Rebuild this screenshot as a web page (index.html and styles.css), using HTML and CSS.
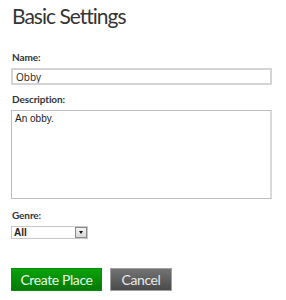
FILE: index.html
```html
<!DOCTYPE html>
<html lang="en">
<head>
    <meta charset="utf-8" />
    <title>Basic Settings</title>
    <link rel="stylesheet" href="styles.css">
</head>
<body>
    <div class="settings">
        <h1>Basic Settings</h1>

        <div class="field">
            <label for="name">Name:</label>
            <input id="name" class="text-input" type="text" value="Obby" />
        </div>

        <div class="field">
            <label for="description">Description:</label>
            <textarea id="description" class="text-area">An obby.</textarea>
        </div>

        <div class="field">
            <label for="genre">Genre:</label>
            <div class="select">
                <span class="select-value">All</span>
                <span class="select-arrow"></span>
            </div>
        </div>

        <div class="actions">
            <button class="btn btn-create">Create Place</button>
            <button class="btn btn-cancel">Cancel</button>
        </div>
    </div>
</body>
</html>
```

FILE: styles.css
```css
* {
    margin: 0;
    padding: 0;
    box-sizing: border-box;
}

body {
    font-family: Lato, "Open Sans", sans-serif;
    background: #fff;
    color: #333;
    width: 286px;
    height: 300px;
    overflow: hidden;
}

.settings {
    padding: 2px 14px 0 11px;
}

h1 {
    font-size: 21px;
    font-weight: 400;
    letter-spacing: -1px;
    line-height: 28px;
    color: #343434;
    margin-bottom: 21px;
    padding-left: 1px;
}

.field {
    display: flex;
    flex-direction: column;
}

.field label {
    font-size: 10px;
    font-weight: 700;
    letter-spacing: -0.1px;
    color: #333;
    line-height: 13px;
    margin-bottom: 4px;
    padding-left: 1px;
}

.text-input {
    width: 261px;
    height: 17px;
    border: 2px solid #d4d4d4;
    font-family: "Open Sans", sans-serif;
    font-size: 10px;
    color: #222;
    padding: 0 3px;
    margin-bottom: 8px;
    outline: none;
}

.text-area {
    width: 261px;
    height: 89px;
    border: 1px solid #bdbdbd;
    border-right: 2px solid #d8d8d8;
    font-family: "Liberation Sans", Arial, sans-serif;
    font-size: 10px;
    color: #222;
    padding: 2px 3px;
    resize: none;
    margin-bottom: 10px;
    outline: none;
}

.select {
    width: 77px;
    height: 13px;
    border: 1px solid #c8c8c8;
    display: flex;
    align-items: center;
    justify-content: space-between;
}

.select-value {
    font-family: "Liberation Sans", Arial, sans-serif;
    font-size: 10px;
    font-weight: 700;
    color: #222;
    padding-left: 2px;
}

.select-arrow {
    width: 12px;
    height: 11px;
    border: 1px solid #888;
    background: linear-gradient(#f4f4f4, #d8d8d8);
    position: relative;
}

.select-arrow::after {
    content: "";
    position: absolute;
    left: 3px;
    top: 3px;
    border-left: 2.5px solid transparent;
    border-right: 2.5px solid transparent;
    border-top: 3px solid #111;
}

.actions {
    display: flex;
    gap: 8px;
    margin-top: 29px;
}

.btn {
    height: 23px;
    font-family: Lato, "Open Sans", sans-serif;
    font-size: 14px;
    letter-spacing: -0.4px;
    border: 1px solid;
    cursor: pointer;
}

.btn-create {
    width: 91px;
    background: linear-gradient(#0aa20a, #027a02);
    border-color: #07900b;
    color: #e8f6e8;
}

.btn-cancel {
    width: 62px;
    background: linear-gradient(#737373, #4a4a4a);
    border-color: #a0a0a0;
    color: #e8e8e8;
}
```
